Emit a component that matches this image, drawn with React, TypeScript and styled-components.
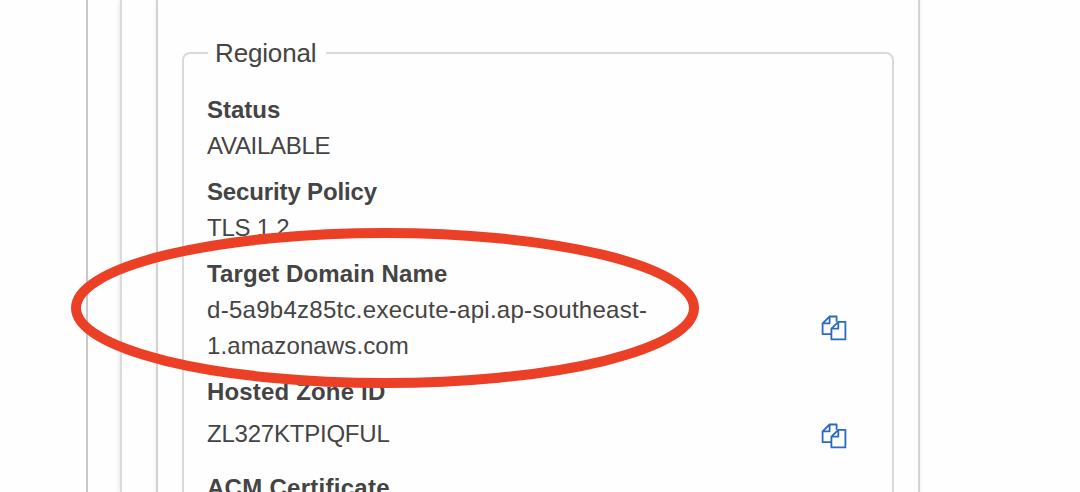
import React from 'react';
import styled, { createGlobalStyle } from 'styled-components';

const GlobalStyle = createGlobalStyle`
  * { box-sizing: border-box; }
  html, body { margin: 0; background: #fefefe; overflow: hidden; }
  body { font-family: 'Liberation Sans', Arial, Helvetica, sans-serif; color: #444; }
`;

const Page = styled.main`
  position: relative;
  width: 1080px;
  height: 492px;
  overflow: hidden;
  display: flex;
  padding-left: 86px;
`;

const Rail = styled.div<{ $width: number; $color: string; $shadow?: boolean }>`
  flex: none;
  width: ${(p) => p.$width}px;
  border-left: 2px solid ${(p) => p.$color};
  box-shadow: ${(p) => (p.$shadow ? '-1px 0 4px rgba(0, 0, 0, 0.09)' : 'none')};
`;

const Card = styled.section`
  flex: none;
  width: 764px;
  height: 560px;
  padding: 37px 24px 0;
  border: solid #d3d3d3;
  border-width: 0 2px;
  box-shadow: 0 0 4px rgba(0, 0, 0, 0.08);
`;

const Group = styled.fieldset`
  margin: 0;
  height: 520px;
  padding: 23px 24px 0 23px;
  border: 2px solid #d9d9d9;
  border-radius: 8px;
`;

const Legend = styled.legend`
  margin-left: 1px;
  padding: 0 10px 0 7px;
  font-size: 26px;
  line-height: 32px;
  letter-spacing: -0.15px;
`;

const Field = styled.div`
  margin-bottom: 10px;
  font-size: 24px;
  line-height: 36px;
`;

const Label = styled.div<{ $track?: number }>`
  font-weight: 700;
  letter-spacing: ${(p) => p.$track ?? 0}px;
`;

const ValueRow = styled.div<{ $tall?: boolean }>`
  display: flex;
  justify-content: space-between;
  align-items: center;
  min-height: ${(p) => (p.$tall ? 48 : 36)}px;
  margin-bottom: ${(p) => (p.$tall ? 12 : 0)}px;
`;

const Value = styled.div<{ $track?: number }>`
  width: 460px;
  letter-spacing: ${(p) => p.$track ?? 0}px;
`;

const Line = styled.span<{ $track: number }>`
  display: block;
  letter-spacing: ${(p) => p.$track}px;
`;

const CopyButton = styled.button<{ $drop?: number }>`
  display: flex;
  margin: ${(p) => p.$drop ?? 0}px 21px 0 0;
  padding: 0;
  border: 0;
  background: none;
`;

const Highlight = styled.svg`
  position: absolute;
  left: 71px;
  top: 228px;
  pointer-events: none;
`;

function Copy({ drop }: { drop?: number }) {
  return (
    <CopyButton $drop={drop} aria-label="Copy">
      <svg width="26" height="26" viewBox="0 0 26 26" fill="none" stroke="#2b69bf" strokeWidth="1.8" strokeLinejoin="round">
        <path d="M10 19.1H1.6V8.3L8.6 1.5H15.6V6.8M1.6 8.3H8.6V1.5" />
        <path d="M17.3 6.8H24.4V24.4H10.4V13.6ZM10.4 13.6H17.3V6.8" />
      </svg>
    </CopyButton>
  );
}

export default function App() {
  return (
    <>
      <GlobalStyle />
      <Page>
        <Rail $width={34} $color="#c8c8c8" />
        <Rail $width={36} $color="#dadada" $shadow />
        <Card>
          <Group>
            <Legend>Regional</Legend>
            <Field>
              <Label>Status</Label>
              <ValueRow><Value $track={-0.28}>AVAILABLE</Value></ValueRow>
            </Field>
            <Field>
              <Label $track={-0.14}>Security Policy</Label>
              <ValueRow><Value $track={-0.25}>TLS 1.2</Value></ValueRow>
            </Field>
            <Field>
              <Label $track={0.12}>Target Domain Name</Label>
              <ValueRow>
                <Value>
                  <Line $track={0.28}>d-5a9b4z85tc.execute-api.ap-southeast-</Line>
                  <Line $track={0.12}>1.amazonaws.com</Line>
                </Value>
                <Copy />
              </ValueRow>
            </Field>
            <Field>
              <Label $track={0.17}>Hosted Zone ID</Label>
              <ValueRow $tall>
                <Value $track={-0.22}>ZL327KTPIQFUL</Value>
                <Copy drop={4} />
              </ValueRow>
            </Field>
            <Field>
              <Label $track={0.28}>ACM Certificate</Label>
            </Field>
          </Group>
        </Card>
        <Highlight width="628" height="160" viewBox="0 0 628 160" fill="none">
          <ellipse cx="314" cy="80" rx="309" ry="75" stroke="#ec4026" strokeWidth="10" />
        </Highlight>
      </Page>
    </>
  );
}
